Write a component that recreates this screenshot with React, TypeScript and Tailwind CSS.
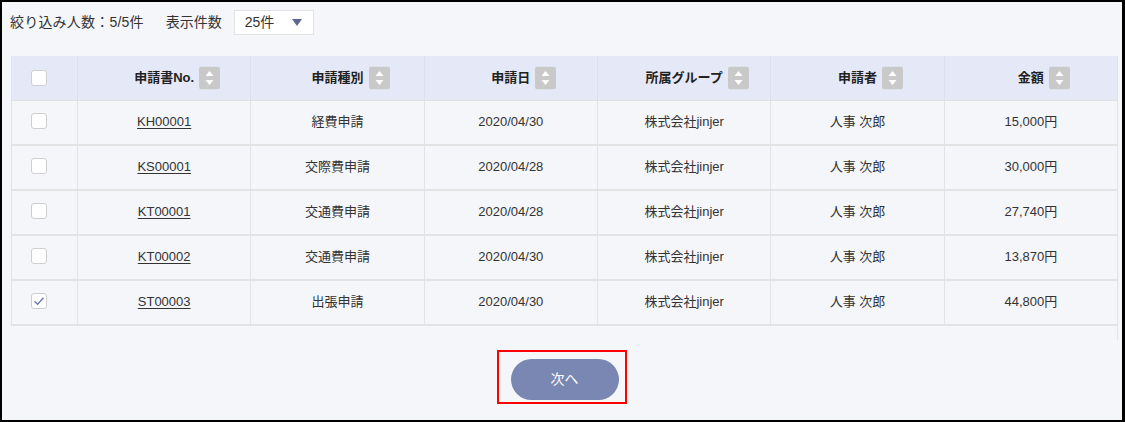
import React from 'react'

const rows = [
  { no: 'KH00001', kind: '経費申請', date: '2020/04/30', group: '株式会社jinjer', user: '人事 次郎', amount: '15,000円', checked: false },
  { no: 'KS00001', kind: '交際費申請', date: '2020/04/28', group: '株式会社jinjer', user: '人事 次郎', amount: '30,000円', checked: false },
  { no: 'KT00001', kind: '交通費申請', date: '2020/04/28', group: '株式会社jinjer', user: '人事 次郎', amount: '27,740円', checked: false },
  { no: 'KT00002', kind: '交通費申請', date: '2020/04/30', group: '株式会社jinjer', user: '人事 次郎', amount: '13,870円', checked: false },
  { no: 'ST00003', kind: '出張申請', date: '2020/04/30', group: '株式会社jinjer', user: '人事 次郎', amount: '44,800円', checked: true },
]

const headers = ['申請書No.', '申請種別', '申請日', '所属グループ', '申請者', '金額']

function SortIcon() {
  return (
    <svg width="21" height="23" viewBox="0 0 21 23" className="block">
      <rect x="0" y="0" width="21" height="23" rx="3" fill="#c9c9c9" />
      <polygon points="10.5,4.5 14.5,9.5 6.5,9.5" fill="#ffffff" />
      <polygon points="6.5,13.5 14.5,13.5 10.5,18.5" fill="#ffffff" />
    </svg>
  )
}

function Checkbox({ checked }: { checked?: boolean }) {
  return (
    <span className="flex h-4 w-4 items-center justify-center rounded-[3px] border border-[#cfcfcf] bg-white">
      {checked && (
        <svg width="12" height="12" viewBox="0 0 12 12">
          <path d="M1.5 6.2 L4.6 9.2 L10.5 2.8" fill="none" stroke="#6e79a6" strokeWidth="1.4" />
        </svg>
      )}
    </span>
  )
}

export default function App() {
  return (
    <div
      className="h-[422px] w-[1125px] border-t-2 border-b-2 border-l-2 border-r-[3px] border-black bg-[#f5f6fa] text-[#333333]"
      style={{ fontFamily: '"Liberation Sans", "Noto Sans CJK JP", sans-serif' }}
    >
      <div className="flex items-center pl-[8px] pt-[8px] text-[14px]">
        <span className="tracking-[0.2px]">絞り込み人数：5/5件</span>
        <span className="ml-[22px]">表示件数</span>
        <div className="ml-[12px] flex h-[25px] w-[80px] items-center justify-between border border-[#e3e3e3] bg-white pl-[10px] pr-[11px]">
          <span>25件</span>
          <svg width="10" height="7" viewBox="0 0 10 7">
            <polygon points="0,0 10,0 5,7" fill="#5e6791" />
          </svg>
        </div>
      </div>

      <div className="ml-[9px] mr-[4px] mt-[21px] border-r border-[#e3e3e3] pb-[14px]">
        <div className="grid h-[45px] grid-cols-[66px_repeat(6,1fr)] border-b border-[#e0e0e0] bg-[#e5e8f6] text-[13px] font-bold text-[#222222]">
          <div className="flex items-center border-l border-[#e3e3e3] pl-[19px]">
            <Checkbox />
          </div>
          {headers.map((h) => (
            <div key={h} className="flex items-center justify-center border-l border-[#dcdfec]">
              <span className="relative">
                {h}
                <span className="absolute left-full top-1/2 ml-[5px] -translate-y-1/2">
                  <SortIcon />
                </span>
              </span>
            </div>
          ))}
        </div>
        {rows.map((r) => (
          <div
            key={r.no}
            className="grid h-[45px] grid-cols-[66px_repeat(6,1fr)] border-b-2 border-[#e3e3e3] text-[13px]"
          >
            <div className="flex items-center border-l border-[#e3e3e3] pl-[19px] pb-[4px]">
              <Checkbox checked={r.checked} />
            </div>
            <div className="flex items-center justify-center border-l border-[#e3e3e3] pb-[1px]">
              <span className="underline underline-offset-2">{r.no}</span>
            </div>
            <div className="flex items-center justify-center border-l border-[#e3e3e3] pb-[1px]">{r.kind}</div>
            <div className="flex items-center justify-center border-l border-[#e3e3e3] pb-[1px]">{r.date}</div>
            <div className="flex items-center justify-center border-l border-[#e3e3e3] pb-[1px]">{r.group}</div>
            <div className="flex items-center justify-center border-l border-[#e3e3e3] pb-[1px]">{r.user}</div>
            <div className="flex items-center justify-center border-l border-[#e3e3e3] pb-[1px]">{r.amount}</div>
          </div>
        ))}
      </div>

      <div className="mt-[19px] flex justify-center pl-[9px] pr-[4px]">
        <div className="relative">
          <button className="flex h-[41px] w-[108px] items-center justify-center rounded-full bg-[#7b87b3] text-[14px] text-white">
            次へ
          </button>
          <span className="absolute -left-[14px] -top-[9px] h-[54px] w-[130px] border-2 border-[#ff0000]" />
        </div>
      </div>
    </div>
  )
}
